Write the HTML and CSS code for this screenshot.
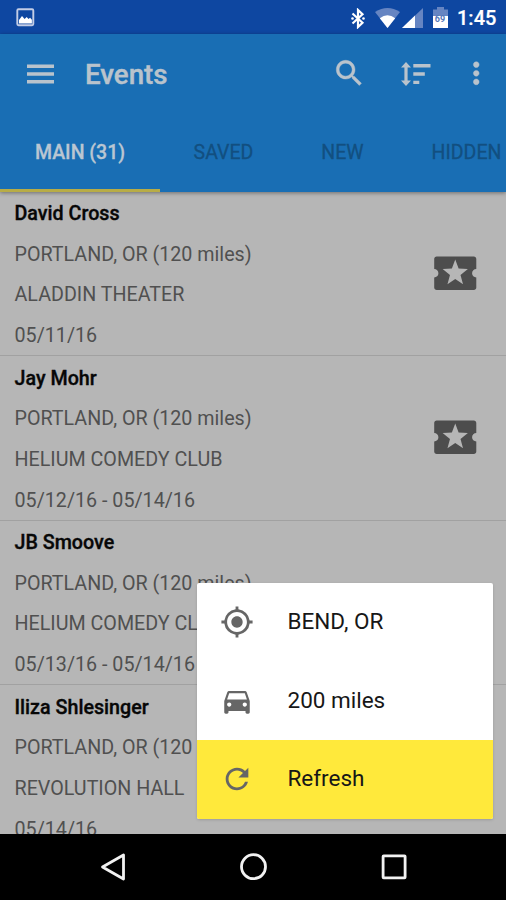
FILE: index.html
```html
<!DOCTYPE html>
<html lang="en">
<head>
<meta charset="utf-8">
<title>Events</title>
<link rel="stylesheet" href="styles.css">
</head>
<body>
<div class="screen">
  <header class="status">
    <svg class="status-pic" viewBox="0 0 19 19"><rect x="1.3" y="1.3" width="16" height="16" rx="1.2" fill="none" stroke="#c3cde6" stroke-width="1.9"/><path d="M3 15.5v-3.600l3-3.800 2.600 3 2.100-2 1.800 1.800 1.600-1.200 1.800 2v3.800z" fill="#fff"/></svg>
    <div class="status-right">
      <svg class="bt" viewBox="0 0 14 21"><path d="M1.500 5.500l10 9.200-4.500 4.300V2l4.500 4.300-10 9.200" fill="none" stroke="#fff" stroke-width="2.200"/><circle cx="1.500" cy="10.500" r="1.300" fill="#fff"/><circle cx="12.500" cy="10.500" r="1.300" fill="#fff"/></svg>
      <svg class="wifi" viewBox="0 0 25 20"><path d="M12.500 20L0 4Q12.500-4 25 4z" fill="#6685c2"/><path d="M12.500 20L4.800 10.200Q12.500 4.500 20.200 10.200z" fill="#fff"/></svg>
      <svg class="cell" viewBox="0 0 21 20"><path d="M0 20L21 0v20z" fill="#6685c2"/><path d="M0 20L13 7.600V20z" fill="#fff"/></svg>
      <div class="battery"><svg viewBox="0 0 15 21"><path d="M4 0h7v2.500h4V10H0V2.500h4z" fill="#6685c2"/><path d="M0 9h15v12H0z" fill="#fff"/></svg><span>69</span></div>
      <span class="clock">1:45</span>
    </div>
  </header>
  <div class="appbar">
    <div class="toolbar">
      <svg class="menu" viewBox="0 0 27 20"><path d="M0 .5h27v3.500H0zM0 8.200h27v3.500H0zM0 15.900h27v3.500H0z"/></svg>
      <h1>Events</h1>
      <svg class="icon search" viewBox="0 0 24 24"><path d="M15.500 14h-.79l-.28-.27C15.410 12.590 16 11.110 16 9.500 16 5.910 13.090 3 9.500 3S3 5.910 3 9.500 5.910 16 9.500 16c1.610 0 3.090-.59 4.230-1.570l.27.28v.79l5 4.990L20.490 19l-4.990-5zm-6 0C7.010 14 5 11.990 5 9.500S7.010 5 9.500 5 14 7.010 14 9.500 11.990 14 9.500 14z"/></svg>
      <svg class="sort" viewBox="0 0 30 24"><path d="M5 0L10 5.400H6.600v13.200H10L5 24 0 18.600h3.400V5.400H0zM12.300 2H29.500v3.400H12.300zM12.300 10.300h11.500v3.400H12.300zM12.300 18.700h6v3.400h-6z"/></svg>
      <svg class="icon more" viewBox="0 0 24 24"><path d="M12 8c1.100 0 2-.9 2-2s-.9-2-2-2-2 .9-2 2 .9 2 2 2zm0 2c-1.100 0-2 .9-2 2s.9 2 2 2 2-.9 2-2-.9-2-2-2zm0 6c-1.100 0-2 .9-2 2s.9 2 2 2 2-.9 2-2-.9-2-2-2z"/></svg>
    </div>
    <nav class="tabs">
      <div class="tab active"><span>MAIN (31)</span></div>
      <div class="tab saved"><span>SAVED</span></div>
      <div class="tab new"><span>NEW</span></div>
      <div class="tab hidden"><span>HIDDEN</span></div>
    </nav>
  </div>
  <main class="list">
    <article class="event">
      <div class="info"><h2>David Cross</h2><p>PORTLAND, OR (120 miles)</p><p>ALADDIN THEATER</p><p>05/11/16</p></div>
      <svg class="ticket" viewBox="0 0 24 24"><path d="M20 12c0-1.100.9-2 2-2V5.200c0-.7-.5-1.200-1.200-1.200H3.200C2.500 4 2 4.500 2 5.200V10c1.100 0 2 .9 2 2s-.9 2-2 2v4.800c0 .7.5 1.200 1.200 1.200h17.600c.7 0 1.200-.5 1.200-1.200V14c-1.100 0-2-.9-2-2zm-4.300 5.200L12 14.700l-3.700 2.500 1.200-4.400L6 10l4.400-.2L12 5.500l1.600 4.300L18 10l-3.500 2.800 1.200 4.400z"/></svg>
    </article>
    <article class="event">
      <div class="info"><h2>Jay Mohr</h2><p>PORTLAND, OR (120 miles)</p><p>HELIUM COMEDY CLUB</p><p>05/12/16 - 05/14/16</p></div>
      <svg class="ticket" viewBox="0 0 24 24"><path d="M20 12c0-1.100.9-2 2-2V5.200c0-.7-.5-1.200-1.200-1.200H3.200C2.500 4 2 4.500 2 5.200V10c1.100 0 2 .9 2 2s-.9 2-2 2v4.800c0 .7.5 1.200 1.200 1.200h17.600c.7 0 1.200-.5 1.200-1.200V14c-1.100 0-2-.9-2-2zm-4.300 5.200L12 14.700l-3.700 2.500 1.200-4.400L6 10l4.400-.2L12 5.500l1.600 4.300L18 10l-3.500 2.800 1.200 4.400z"/></svg>
    </article>
    <article class="event">
      <div class="info"><h2>JB Smoove</h2><p>PORTLAND, OR (120 miles)</p><p>HELIUM COMEDY CLUB</p><p>05/13/16 - 05/14/16</p></div>
    </article>
    <article class="event">
      <div class="info"><h2>Iliza Shlesinger</h2><p>PORTLAND, OR (120 miles)</p><p>REVOLUTION HALL</p><p>05/14/16</p></div>
    </article>
  </main>
  <footer class="navbar">
    <svg viewBox="0 0 28 28"><path d="M3.500 14L24.500 2v24z" /></svg>
    <svg viewBox="0 0 28 28"><circle cx="14.500" cy="13.700" r="12"/></svg>
    <svg viewBox="0 0 28 28"><rect x="3.100" y="2.900" width="22" height="22" rx=".6"/></svg>
  </footer>
  <div class="popup">
    <div class="option">
      <svg viewBox="0 0 24 24"><path d="M12 8c-2.210 0-4 1.790-4 4s1.790 4 4 4 4-1.790 4-4-1.790-4-4-4zm8.940 3A8.994 8.994 0 0 0 13 3.060V1h-2v2.060A8.994 8.994 0 0 0 3.060 11H1v2h2.060A8.994 8.994 0 0 0 11 20.940V23h2v-2.060A8.994 8.994 0 0 0 20.940 13H23v-2h-2.060zM12 19c-3.870 0-7-3.130-7-7s3.130-7 7-7 7 3.130 7 7-3.130 7-7 7z"/></svg>
      <span>BEND, OR</span>
    </div>
    <div class="option">
      <svg class="car" viewBox="0 0 24 24"><path d="M18.920 6.010C18.720 5.420 18.160 5 17.500 5h-11c-.66 0-1.210.42-1.420 1.010L3 12v8c0 .55.45 1 1 1h1c.55 0 1-.45 1-1v-1h12v1c0 .55.45 1 1 1h1c.55 0 1-.45 1-1v-8l-2.080-5.990zM6.500 16c-.83 0-1.500-.67-1.500-1.500S5.670 13 6.500 13s1.500.67 1.500 1.500S7.330 16 6.500 16zm11 0c-.83 0-1.500-.67-1.500-1.500s.67-1.500 1.500-1.500 1.500.67 1.500 1.500-.67 1.500-1.500 1.500zM5 11l1.500-4.500h11L19 11H5z"/></svg>
      <span>200 miles</span>
    </div>
    <div class="option refresh">
      <svg viewBox="0 0 24 24"><path d="M17.650 6.350A7.958 7.958 0 0 0 12 4c-4.420 0-7.990 3.580-7.990 8s3.570 8 7.990 8c3.730 0 6.840-2.550 7.730-6h-2.080A5.990 5.990 0 0 1 12 18c-3.310 0-6-2.690-6-6s2.690-6 6-6c1.660 0 3.140.69 4.220 1.780L13 11h7V4l-2.350 2.350z"/></svg>
      <span>Refresh</span>
    </div>
  </div>
</div>
</body>
</html>
```
FILE: styles.css
```css
* { box-sizing: border-box; }
body { margin: 0; font-family: Roboto, "Liberation Sans", sans-serif; }
svg { display: block; flex: none; }
h1, h2, p { margin: 0; white-space: nowrap; }
.screen { position: relative; width: 506px; height: 900px; overflow: hidden; display: flex; flex-direction: column; background: #b6b6b6; }
.status { height: 34px; flex: none; background: #0e47a1; display: flex; justify-content: space-between; padding: 8px 10px 0 16px; }
.status-pic { width: 19px; height: 19px; }
.status-right { display: flex; align-items: flex-start; }
.bt { width: 14px; height: 21px; margin-right: 10px; }
.wifi { width: 25px; height: 20px; margin-right: 2px; }
.cell { width: 21px; height: 20px; margin-right: 10px; }
.battery { position: relative; width: 15px; height: 21px; margin: -1px 9.500px 0 0; }
.battery svg { width: 15px; height: 21px; }
.battery span { position: absolute; left: 0; top: 7px; width: 15px; text-align: center; font-size: 9px; line-height: 10px; font-weight: 700; color: #5577b8; }
.clock { width: 39px; font-size: 20px; line-height: 20px; font-weight: 500; color: #fff; white-space: nowrap; -webkit-text-stroke: .2px #fff; }
.appbar { height: 157.500px; flex: none; background: #196eb4; position: relative; box-shadow: 0 1px 4px rgba(0,0,0,.4); }
.toolbar { height: 79px; display: flex; align-items: center; }
.toolbar svg { fill: #b9c3cc; }
.icon { width: 34.500px; height: 34.500px; }
.menu { width: 27px; height: 20px; margin-left: 26.500px; }
h1 { margin: 3px auto 0 31.500px; font-size: 27.700px; line-height: 36px; font-weight: 500; color: #b9c3cc; -webkit-text-stroke: .4px #b9c3cc; }
.search { margin-right: 35px; stroke: #b9c3cc; stroke-width: .3; }
.sort { width: 30px; height: 24px; margin-right: 27.500px; }
.more { margin-right: 13px; stroke: #b9c3cc; stroke-width: .3; }
.tabs { display: flex; height: 78.500px; color: #124f80; font-size: 19.500px; font-weight: 400; line-height: 80px; -webkit-text-stroke: .3px #124f80; }
.tab { flex: none; text-align: center; white-space: nowrap; }
.active { width: 160px; color: #bac6d2; font-weight: 500; -webkit-text-stroke: .3px #bac6d2; border-bottom: 3px solid #b8ac46; }
.saved { width: 127px; }
.new { width: 111px; }
.hidden { width: 137px; }
.list { flex: 1; min-height: 0; overflow: hidden; }
.event { height: 164.500px; padding: 2.500px 26px 0 14.500px; display: flex; justify-content: space-between; border-bottom: 1.500px solid #a1a1a1; }
.info { font-size: 19.700px; line-height: 40.700px; color: #505050; }
h2 { font-size: 19.700px; line-height: 40.700px; font-weight: 500; color: #070707; -webkit-text-stroke: .35px #070707; }
.ticket { width: 50.500px; height: 50.500px; margin-top: 53.500px; fill: #4d4d4d; }
.navbar { height: 66.500px; flex: none; background: #000; display: flex; justify-content: center; align-items: center; gap: 112.500px; }
.navbar svg { width: 28px; height: 28px; fill: none; stroke: #f2f2f2; stroke-width: 2.800; stroke-linejoin: round; }
.popup { position: absolute; left: 197px; top: 582.500px; width: 295.500px; height: 236.500px; background: #fff; border-radius: 2px; overflow: hidden; box-shadow: 0 1px 3px rgba(0,0,0,.15); }
.option { height: 78.800px; display: flex; align-items: center; padding-left: 22.500px; gap: 34px; font-size: 22.500px; color: #171717; }
.option span { margin-top: -2px; }
.option svg { width: 34px; height: 34px; fill: #666; }
.refresh { background: #ffe93b; }
```
